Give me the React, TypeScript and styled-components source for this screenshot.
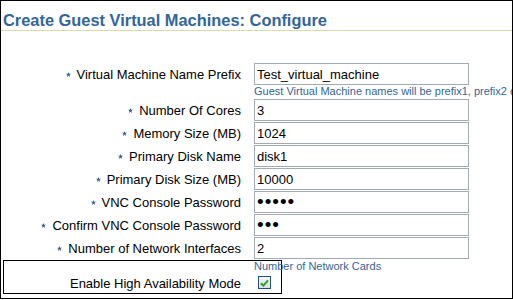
import React from 'react'
import styled, { createGlobalStyle } from 'styled-components'

const GlobalStyle = createGlobalStyle`
  body {
    margin: 0;
    background: #ffffff;
    font-family: 'Liberation Sans', Arial, sans-serif;
  }
`

const Page = styled.div`
  width: 513px;
  height: 299px;
  box-sizing: border-box;
  border: 1px solid #000000;
  background: #ffffff;
  overflow: hidden;
`

const Title = styled.h1`
  margin: 0;
  padding: 9px 2px 0;
  font-size: 16.4px;
  line-height: 20px;
  font-weight: bold;
  color: #336699;
  border-bottom: 1px solid #d6dcaa;
  white-space: nowrap;
`

const Form = styled.div`
  margin-top: 32px;
  padding-left: 3px;
  display: grid;
  grid-template-columns: 237px 215px;
  column-gap: 13px;
  row-gap: 1px;
  align-items: start;
`

const Label = styled.label`
  display: flex;
  justify-content: flex-end;
  align-items: center;
  gap: 6px;
  height: 22px;
  font-size: 13px;
  color: #000000;
  white-space: nowrap;
`

const Field = styled.div`
  display: flex;
  flex-direction: column;
  min-width: 0;
`

const TextInput = styled.input<{ $masked?: boolean }>`
  width: 215px;
  height: 22px;
  box-sizing: border-box;
  margin: 0;
  padding: 0 2px;
  border: 1px solid #a2aab3;
  border-radius: 0;
  background: #ffffff;
  color: #000000;
  font-family: 'Liberation Sans', Arial, sans-serif;
  font-size: ${({ $masked }) => ($masked ? '19px' : '13px')};
  letter-spacing: ${({ $masked }) => ($masked ? '1px' : 'normal')};
  outline: none;
`

const Hint = styled.div<{ $tight?: boolean }>`
  font-size: 11px;
  line-height: ${({ $tight }) => ($tight ? '10px' : '13px')};
  color: #336699;
  white-space: nowrap;
`

const FocusBox = styled.div`
  grid-column: 1 / -1;
  margin-left: -1px;
  width: 279px;
  box-sizing: border-box;
  border: 1px solid #000000;
  display: grid;
  grid-template-columns: 237px 27px;
  column-gap: 13px;
`

const CheckLabel = styled.label`
  display: flex;
  justify-content: flex-end;
  height: 22px;
  box-sizing: border-box;
  padding-top: 4px;
  font-size: 13px;
  line-height: 18px;
  color: #000000;
  white-space: nowrap;
`

const CheckBox = styled.span`
  display: flex;
  align-items: center;
  justify-content: center;
  width: 13px;
  height: 13px;
  margin: 5px 0 0 4px;
  box-sizing: border-box;
  border: 1px solid #1f4f8a;
  background: linear-gradient(#f6f6f6, #dedede);
`

const Required = () => (
  <svg width="5" height="5" viewBox="0 0 10 10">
    <polygon
      points="5,0 6.3,3.4 10,3.6 7.1,6 8.1,9.8 5,7.6 1.9,9.8 2.9,6 0,3.6 3.7,3.4"
      fill="#3a5f92"
    />
  </svg>
)

interface FieldDef {
  label: string
  value: string
  masked?: boolean
  hint?: string
}

const fields: FieldDef[] = [
  {
    label: 'Virtual Machine Name Prefix',
    value: 'Test_virtual_machine',
    hint: 'Guest Virtual Machine names will be prefix1, prefix2 or similar',
  },
  { label: 'Number Of Cores', value: '3' },
  { label: 'Memory Size (MB)', value: '1024' },
  { label: 'Primary Disk Name', value: 'disk1' },
  { label: 'Primary Disk Size (MB)', value: '10000' },
  { label: 'VNC Console Password', value: 'abcde', masked: true },
  { label: 'Confirm VNC Console Password', value: 'abc', masked: true },
  { label: 'Number of Network Interfaces', value: '2' },
]

export default function App() {
  return (
    <Page>
      <GlobalStyle />
      <Title>Create Guest Virtual Machines: Configure</Title>
      <Form>
        {fields.map((f) => (
          <React.Fragment key={f.label}>
            <Label>
              <Required />
              {f.label}
            </Label>
            <Field>
              <TextInput
                type={f.masked ? 'password' : 'text'}
                $masked={f.masked}
                defaultValue={f.value}
              />
              {f.hint && <Hint>{f.hint}</Hint>}
            </Field>
          </React.Fragment>
        ))}
        <FocusBox>
          <span />
          <Hint $tight>Number of Network Cards</Hint>
          <CheckLabel>Enable High Availability Mode</CheckLabel>
          <CheckBox role="checkbox" aria-checked="true">
            <svg width="9" height="8" viewBox="0 0 9 8">
              <path
                d="M1 4.2 L3.4 6.6 L8 1.4"
                fill="none"
                stroke="#26a226"
                strokeWidth="2"
              />
            </svg>
          </CheckBox>
        </FocusBox>
      </Form>
    </Page>
  )
}
